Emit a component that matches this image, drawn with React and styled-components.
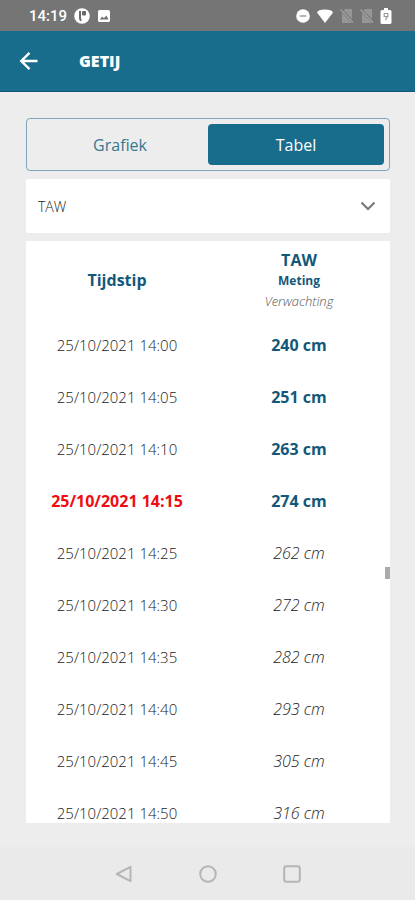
import { useState } from 'react';
import styled, { createGlobalStyle } from 'styled-components';

const measurements = [
  { time: '25/10/2021 14:00', value: '240 cm', measured: true },
  { time: '25/10/2021 14:05', value: '251 cm', measured: true },
  { time: '25/10/2021 14:10', value: '263 cm', measured: true },
  { time: '25/10/2021 14:15', value: '274 cm', measured: true, current: true },
  { time: '25/10/2021 14:25', value: '262 cm' },
  { time: '25/10/2021 14:30', value: '272 cm' },
  { time: '25/10/2021 14:35', value: '282 cm' },
  { time: '25/10/2021 14:40', value: '293 cm' },
  { time: '25/10/2021 14:45', value: '305 cm' },
  { time: '25/10/2021 14:50', value: '316 cm' },
];

const NoSim = () => (
  <svg width="14" height="16" viewBox="0 0 14 16">
    <path d="M5 1h7v14H2V4z" fill="#969696" />
    <path d="M0 1l13 13" stroke="#757575" strokeWidth="3" />
    <path d="M0.5 1.5l12.5 13" stroke="#a3a3a3" strokeWidth="1.2" />
  </svg>
);

const StatusIcons = () => (
  <StatusGroup $gap={6}>
    <svg width="14" height="16" viewBox="0 0 14 16">
      <circle cx="7" cy="8" r="6.8" fill="#fff" />
      <rect x="3.5" y="7" width="7" height="2" rx="1" fill="#b5b5b5" />
    </svg>
    <svg width="18" height="16" viewBox="0 0 18 16">
      <path d="M1 4.5Q2 1.5 9 1.5T17 4.5L9 15z" fill="#fff" />
    </svg>
    <NoSim />
    <NoSim />
    <svg width="12" height="16" viewBox="0 0 12 16">
      <path d="M4 0h4v2h2q1.5 0 1.5 1.5v11Q11.5 16 10 16H2Q.5 16 .5 14.5v-11Q.5 2 2 2h2z" fill="#fff" />
      <path d="M4.200 5.500h3.600v3L6 10.200v2M4.200 5.500v3h3.600" fill="none" stroke="#999" strokeWidth="1.2" />
    </svg>
  </StatusGroup>
);

const App = () => {
  const [view, setView] = useState('tabel');

  return (
    <>
      <GlobalStyle />
      <Screen>
        <StatusBar>
          <StatusGroup $gap={7}>
            <Clock>14:19</Clock>
            <svg width="16" height="16" viewBox="0 0 16 16">
              <circle cx="8" cy="8" r="7.8" fill="#fff" />
              <path d="M6 3v7.500q0 1.500 1.500 2" fill="none" stroke="#6a6a6a" strokeWidth="2" />
              <path d="M8.500 3.500h3v3.500h-3z" fill="#6a6a6a" stroke="#6a6a6a" />
            </svg>
            <svg width="14" height="16" viewBox="0 0 14 16">
              <rect x="1" y="2" width="12" height="12" rx="1.5" fill="#fff" />
              <path d="M2.8 11.5l2.400-3 1.700 1.800L9.300 7.500l2.200 4z" fill="#707070" />
            </svg>
          </StatusGroup>
          <StatusIcons />
        </StatusBar>

        <Header>
          <BackButton type="button" aria-label="Terug">
            <svg width="20" height="20" viewBox="0 0 20 20" fill="none" stroke="currentColor" strokeWidth="2.4">
              <path d="M18.500 10H3M10.500 1.800L2.300 10l8.200 8.200" />
            </svg>
          </BackButton>
          <Title>GETIJ</Title>
        </Header>

        <Content>
          <Tabs>
            <Tab type="button" $active={view === 'grafiek'} onClick={() => setView('grafiek')}>
              Grafiek
            </Tab>
            <Tab type="button" $active={view === 'tabel'} onClick={() => setView('tabel')}>
              Tabel
            </Tab>
          </Tabs>

          <SelectWrapper>
            <Select aria-label="Referentievlak" defaultValue="TAW">
              <option value="TAW">TAW</option>
            </Select>
            <Chevron width="16" height="10" viewBox="0 0 16 10">
              <path d="M1.5 1.5L8 8l6.500-6.500" fill="none" stroke="#777" strokeWidth="2" />
            </Chevron>
          </SelectWrapper>

          <Panel>
            <ScrollArea>
              <Table>
                <thead>
                  <tr>
                    <HeadCell scope="col">Tijdstip</HeadCell>
                    <HeadCell scope="col">
                      TAW
                      <Measured>Meting</Measured>
                      <Expected>Verwachting</Expected>
                    </HeadCell>
                  </tr>
                </thead>
                <tbody>
                  {measurements.map((row) => (
                    <tr key={row.time}>
                      <TimeCell $current={row.current}>{row.time}</TimeCell>
                      <ValueCell $measured={row.measured}>{row.value}</ValueCell>
                    </tr>
                  ))}
                </tbody>
              </Table>
            </ScrollArea>
            <ScrollThumb />
          </Panel>
        </Content>

        <NavBar>
          <NavButton type="button" aria-label="Vorige">
            <svg width="18" height="18" viewBox="0 0 18 18">
              <path d="M15.500 1.800v14.400L1.800 9z" />
            </svg>
          </NavButton>
          <NavButton type="button" aria-label="Startscherm">
            <svg width="18" height="18" viewBox="0 0 18 18">
              <circle cx="9" cy="9" r="7.800" />
            </svg>
          </NavButton>
          <NavButton type="button" aria-label="Recente apps">
            <svg width="18" height="18" viewBox="0 0 18 18">
              <rect x="1.200" y="1.200" width="15.600" height="15.600" rx="2" />
            </svg>
          </NavButton>
        </NavBar>
      </Screen>
    </>
  );
};

const GlobalStyle = createGlobalStyle`
  * {
    box-sizing: border-box;
  }

  body {
    margin: 0;
    background: #ededed;
    font-family: 'Open Sans', 'Noto Sans', sans-serif;
  }

  button, select {
    font-family: inherit;
  }

  svg {
    display: block;
  }
`;

const Screen = styled.div`
  display: flex;
  flex-direction: column;
  height: 100vh;
  background: #ededed;
`;

const StatusBar = styled.div`
  display: flex;
  justify-content: space-between;
  align-items: center;
  height: 31px;
  padding: 0 23px 0 29px;
  background: #757575;
`;

const StatusGroup = styled.div`
  display: flex;
  align-items: center;
  gap: ${({ $gap }) => $gap}px;
`;

const Clock = styled.span`
  color: #fff;
  font-family: Roboto, sans-serif;
  font-size: 15px;
  font-weight: 500;
`;

const Header = styled.header`
  display: flex;
  align-items: center;
  gap: 40px;
  height: 61px;
  padding: 0 19px;
  background: #196d8c;
  border-bottom: 1px solid #0f5878;
`;

const BackButton = styled.button`
  padding: 0;
  border: none;
  background: none;
  color: #fff;
  cursor: pointer;
`;

const Title = styled.h1`
  margin: 0;
  color: #fff;
  font-size: 16px;
  font-weight: 800;
`;

const Content = styled.main`
  display: flex;
  flex: 1;
  flex-direction: column;
  gap: 8px;
  min-height: 0;
  padding: 26px 25px 24px 26px;
`;

const Tabs = styled.div`
  display: flex;
  height: 53px;
  padding: 5px;
  border: 1px solid #7fa6b9;
  border-radius: 4px;
`;

const Tab = styled.button`
  flex: 1;
  padding: 0;
  border: none;
  border-radius: 4px;
  background: ${({ $active }) => ($active ? '#196d8c' : 'transparent')};
  color: ${({ $active }) => ($active ? '#fff' : '#35788f')};
  font-size: 16px;
  cursor: pointer;
`;

const SelectWrapper = styled.div`
  position: relative;
`;

const Select = styled.select`
  display: block;
  width: 100%;
  height: 54px;
  padding: 0 40px 0 12px;
  border: none;
  border-radius: 2px;
  appearance: none;
  background: #fff;
  color: #222;
  font-size: 14px;
  font-weight: 300;
`;

const Chevron = styled.svg`
  position: absolute;
  top: 22px;
  right: 14px;
  pointer-events: none;
`;

const Panel = styled.div`
  position: relative;
  flex: 1;
  min-height: 0;
  background: #fff;
`;

const ScrollArea = styled.div`
  height: 100%;
  overflow-y: auto;
  scrollbar-width: none;
`;

const ScrollThumb = styled.div`
  position: absolute;
  top: 56%;
  right: 0;
  width: 5px;
  height: 12px;
  background: #aaa;
`;

const Table = styled.table`
  width: 100%;
  table-layout: fixed;
  border-collapse: collapse;
  text-align: center;
`;

const HeadCell = styled.th`
  height: 78px;
  padding: 0;
  color: #12587a;
  font-size: 16px;
  font-weight: 700;
  line-height: 22px;
`;

const Measured = styled.div`
  font-size: 12px;
  line-height: 20px;
`;

const Expected = styled.div`
  color: #555;
  font-size: 13px;
  font-style: italic;
  font-weight: 300;
  line-height: 20px;
`;

const Cell = styled.td`
  height: 52px;
  padding: 0;
`;

const TimeCell = styled(Cell)`
  color: ${({ $current }) => ($current ? '#ee0c12' : '#222')};
  font-size: ${({ $current }) => ($current ? '16px' : '15px')};
  font-weight: ${({ $current }) => ($current ? 700 : 300)};
`;

const ValueCell = styled(Cell)`
  color: ${({ $measured }) => ($measured ? '#12587a' : '#222')};
  font-size: 16px;
  font-style: ${({ $measured }) => ($measured ? 'normal' : 'italic')};
  font-weight: ${({ $measured }) => ($measured ? 700 : 300)};
`;

const NavBar = styled.nav`
  display: flex;
  justify-content: center;
  align-items: center;
  gap: 66px;
  height: 53px;
  background: #eaeaea;
`;

const NavButton = styled.button`
  padding: 0;
  border: none;
  background: none;
  cursor: pointer;

  svg {
    fill: none;
    stroke: #b5b5b5;
    stroke-width: 2;
    stroke-linejoin: round;
  }
`;

export default App;
